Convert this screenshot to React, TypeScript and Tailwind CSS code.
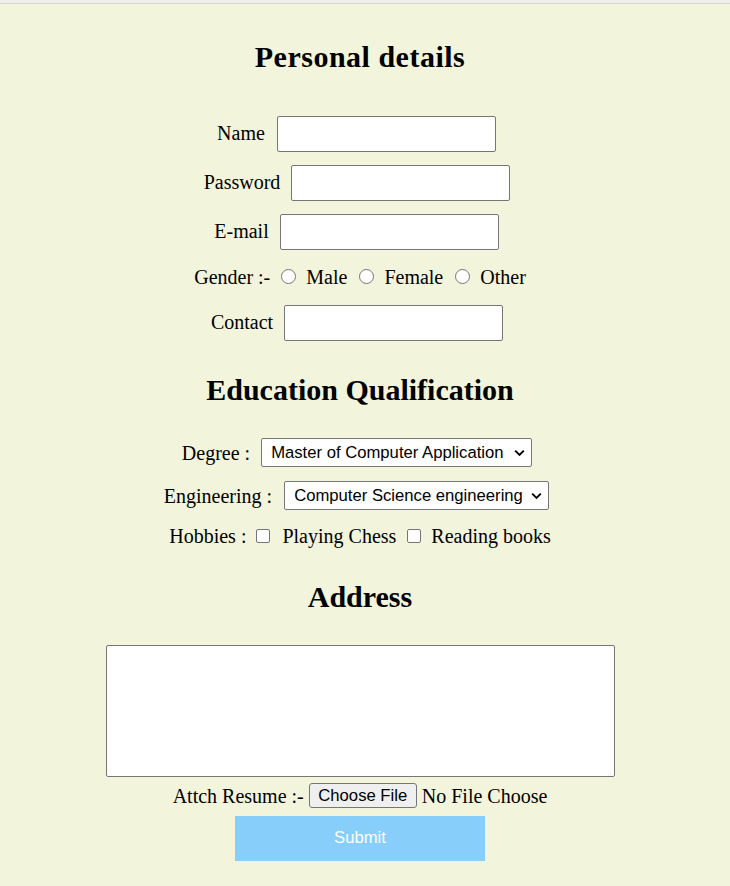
import React from 'react'

const inputCls =
  'w-[219px] h-[36px] border border-[#767676] rounded-[2px] bg-white outline-none'

const Chevron = () => (
  <svg
    className="pointer-events-none absolute right-[7px] top-1/2 -translate-y-1/2"
    width="11"
    height="7"
    viewBox="0 0 11 7"
    fill="none"
  >
    <path d="M1.2 1.2 L5.5 5.5 L9.8 1.2" stroke="#000" strokeWidth="1.9" />
  </svg>
)

const Radio = ({ className = '' }: { className?: string }) => (
  <span
    className={`inline-block w-[15px] h-[15px] shrink-0 rounded-full border border-[#767676] bg-white ${className}`}
  />
)

const Check = ({ className = '' }: { className?: string }) => (
  <span
    className={`inline-block w-[14px] h-[14px] shrink-0 rounded-[2px] border border-[#767676] bg-white ${className}`}
  />
)

const App: React.FC = () => {
  return (
    <div className="min-h-screen bg-[#f3f4dc] font-['Liberation_Serif',serif] text-[20px] text-black">
      <div className="h-[4px] bg-[#efefef] border-b border-[#d4d4d4]" />

      <form className="w-[720px] flex flex-col items-center leading-[24px]">
        <h2 className="mt-[35px] text-[30px] font-bold leading-[36px] tracking-[0.5px]">
          Personal details
        </h2>

        <div className="mt-[41px] flex items-center justify-center gap-[12px] pr-[7px]">
          <label className="-translate-y-px">Name</label>
          <input type="text" className={inputCls} />
        </div>

        <div className="mt-[13px] flex items-center justify-center gap-[11px] pr-[6px]">
          <label className="-translate-y-px">Password</label>
          <input type="password" className={inputCls} />
        </div>

        <div className="mt-[13px] flex items-center justify-center gap-[11px] pr-[7px]">
          <label className="-translate-y-px">E-mail</label>
          <input type="email" className={inputCls} />
        </div>

        <div className="mt-[15px] h-[24px] flex items-center justify-center">
          <span>Gender :-</span>
          <Radio className="ml-[11px] -translate-y-px" />
          <span className="ml-[10px]">Male</span>
          <Radio className="ml-[12px] -translate-y-px" />
          <span className="ml-[10px]">Female</span>
          <Radio className="ml-[12px] -translate-y-px" />
          <span className="ml-[10px]">Other</span>
        </div>

        <div className="mt-[16px] flex items-center justify-center gap-[11px] pr-[6px]">
          <label className="-translate-y-px">Contact</label>
          <input type="tel" className={inputCls} />
        </div>

        <h2 className="mt-[31px] text-[30px] font-bold leading-[36px]">
          Education Qualification
        </h2>

        <div className="mt-[30px] flex items-center justify-center gap-[11px] pr-[6px]">
          <label>Degree :</label>
          <div className="relative">
            <select className="appearance-none w-[271px] h-[29px] pl-[9px] border border-[#767676] rounded-[2px] bg-white font-['Liberation_Sans',sans-serif] text-[16.67px] leading-[20px] outline-none">
              <option>Master of Computer Application</option>
            </select>
            <Chevron />
          </div>
        </div>

        <div className="mt-[14px] flex items-center justify-center gap-[12px] pr-[7px]">
          <label>Engineering :</label>
          <div className="relative">
            <select className="appearance-none w-[265px] h-[29px] pl-[9px] border border-[#767676] rounded-[2px] bg-white font-['Liberation_Sans',sans-serif] text-[16.67px] leading-[20px] outline-none">
              <option>Computer Science engineering</option>
            </select>
            <Chevron />
          </div>
        </div>

        <div className="mt-[14px] h-[24px] flex items-center justify-center">
          <span>Hobbies :</span>
          <Check className="ml-[10px]" />
          <span className="ml-[12px]">Playing Chess</span>
          <Check className="ml-[11px]" />
          <span className="ml-[10px]">Reading books</span>
        </div>

        <h2 className="mt-[31px] text-[30px] font-bold leading-[36px]">
          Address
        </h2>

        <textarea className="mt-[30px] w-[509px] h-[132px] border border-[#767676] rounded-[2px] bg-white resize-none outline-none" />

        <div className="mt-[6px] h-[25px] flex items-center justify-center">
          <span>Attch Resume :-</span>
          <button
            type="button"
            className="ml-[5px] w-[108px] h-[25px] border border-[#767676] rounded-[3px] bg-[#efefef] font-['Liberation_Sans',sans-serif] text-[16.67px] leading-[20px]"
          >
            Choose File
          </button>
          <span className="ml-[5px]">No File Choose</span>
        </div>

        <button
          type="button"
          className="mt-[8px] w-[250px] h-[45px] pb-[2px] bg-[#87cefa] text-white font-['Liberation_Sans',sans-serif] text-[16.67px]"
        >
          Submit
        </button>
      </form>
    </div>
  )
}

export default App
